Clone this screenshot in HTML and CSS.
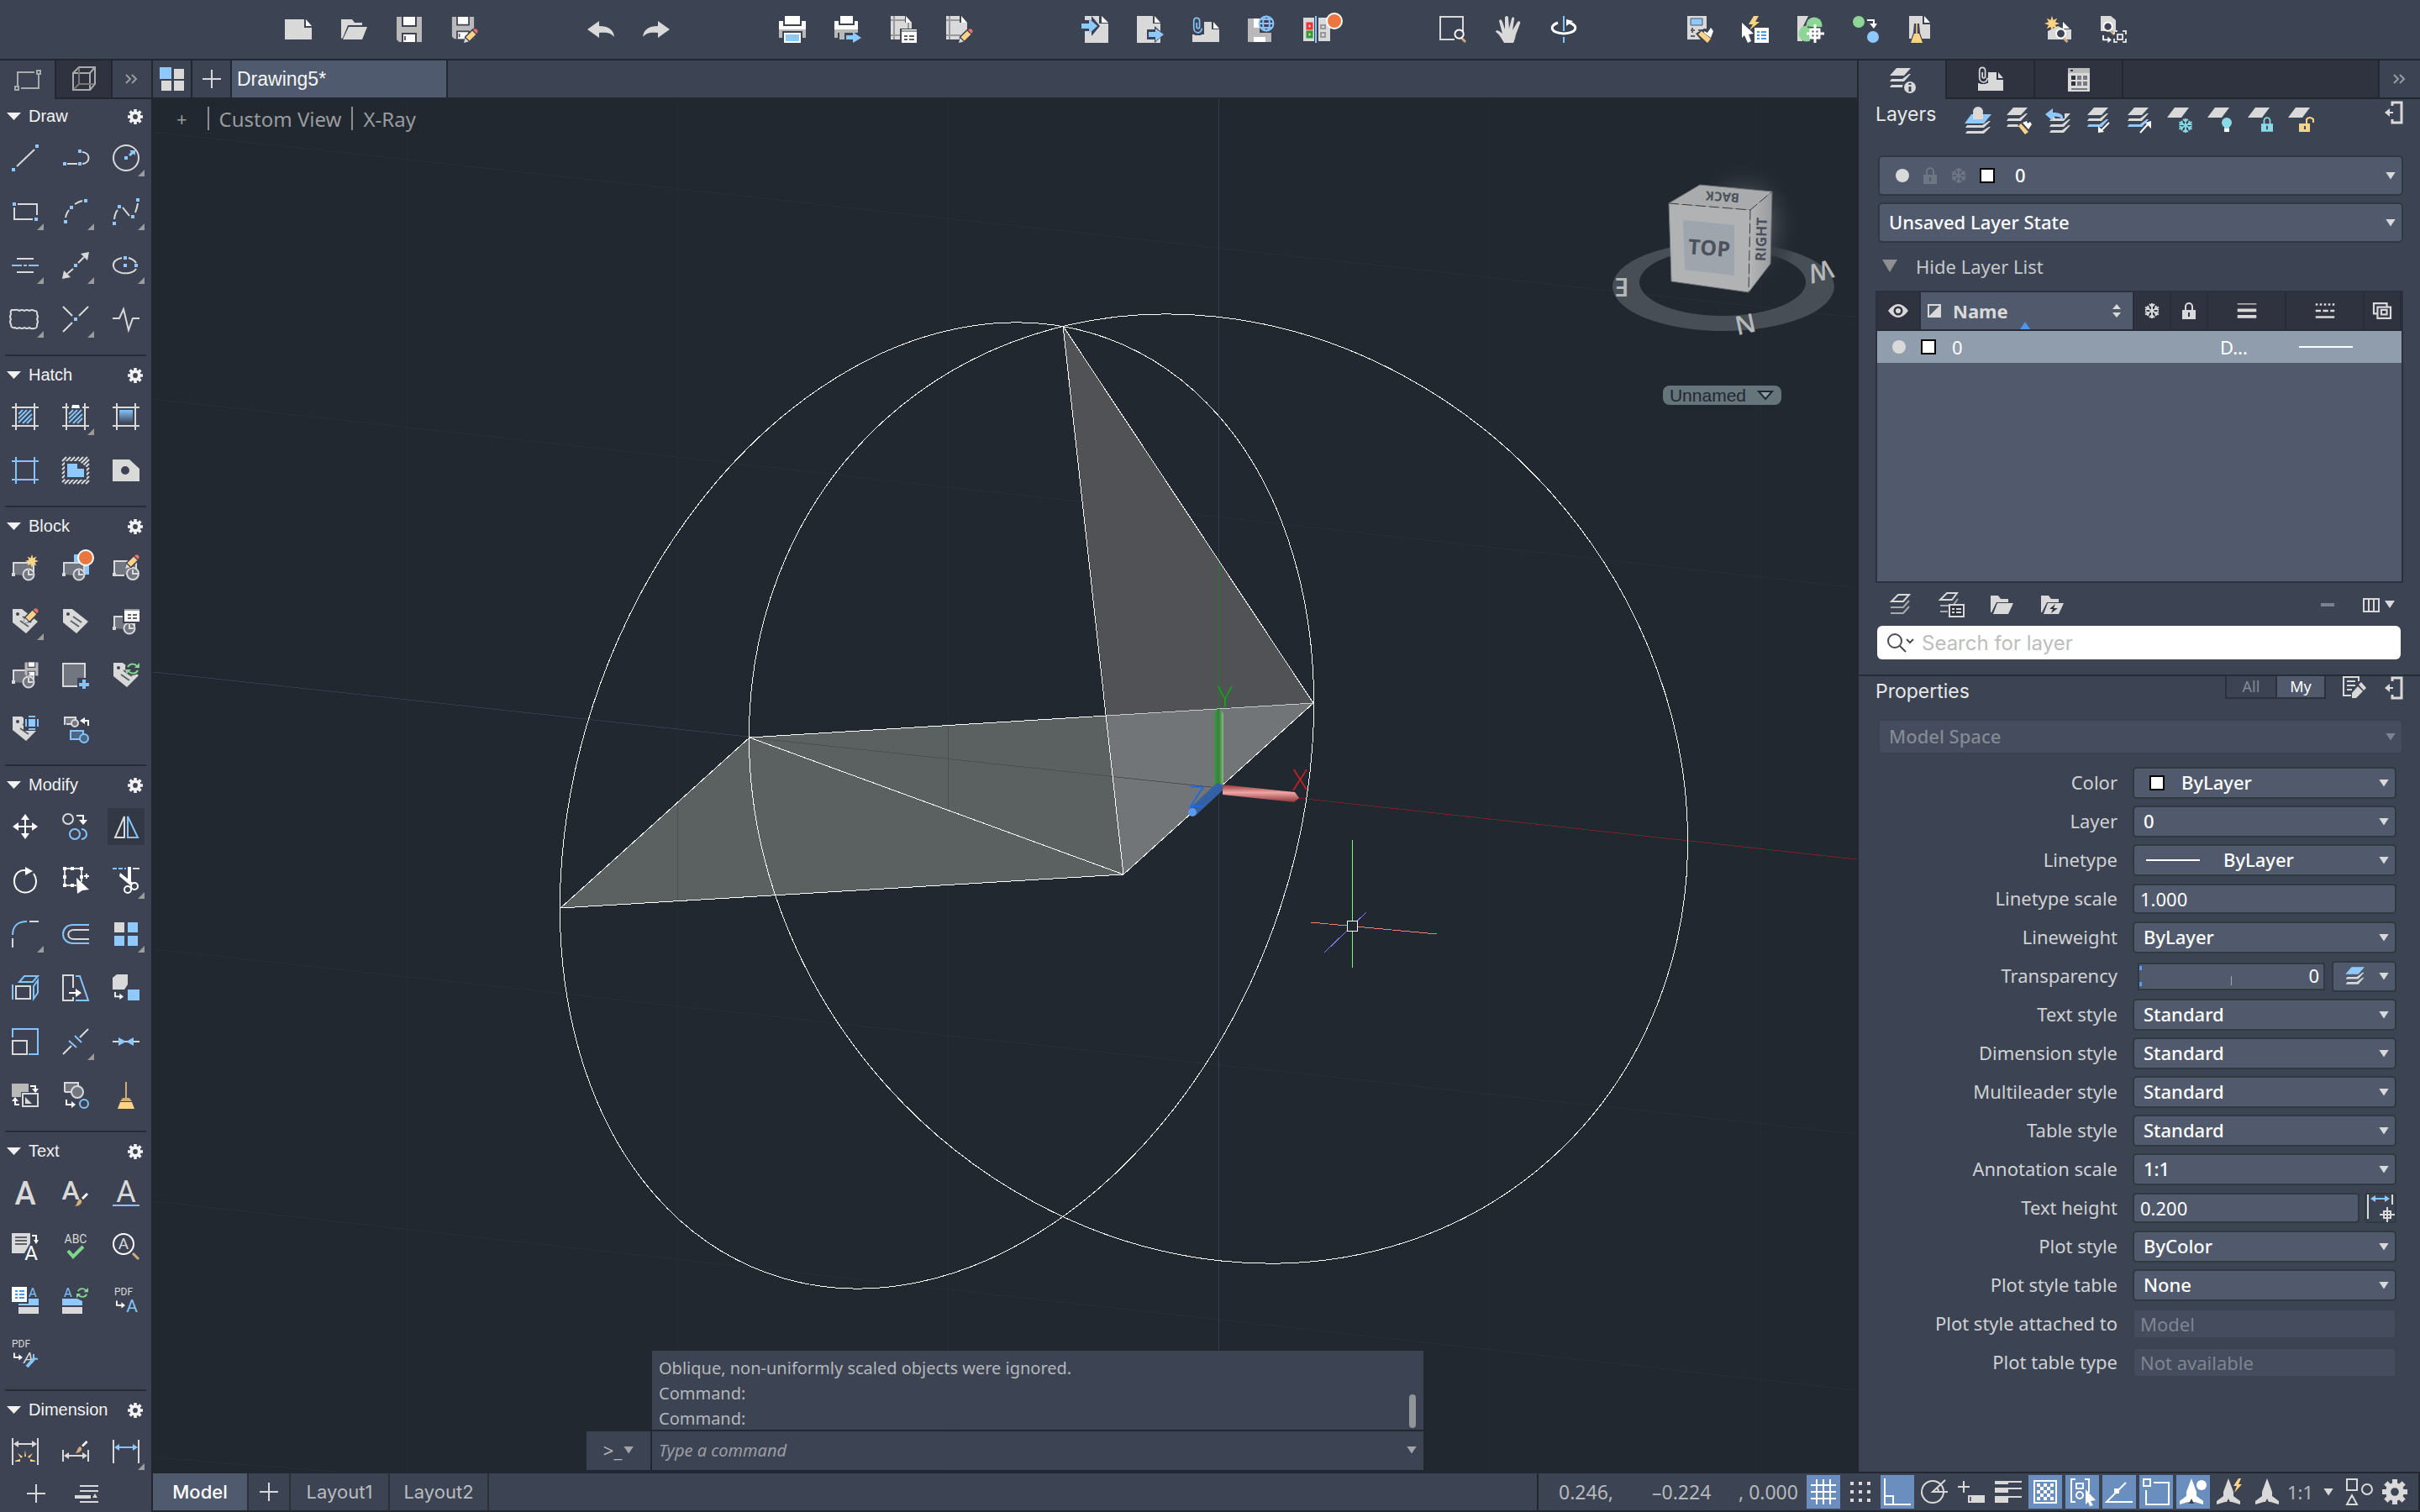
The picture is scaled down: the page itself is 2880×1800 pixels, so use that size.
FILE: index.html
```html
<!DOCTYPE html>
<html lang="en">
<head>
    <meta charset="UTF-8">
    <meta name="viewport" content="width=device-width, initial-scale=1.0">
    <title>Drawing5*</title>
    <link rel="stylesheet" href="styles.css">
</head>
<body>
    <!-- Shared icon parts -->
    <svg class="sprite" aria-hidden="true">
        <symbol id="gear" viewBox="0 0 20 20">
            <path fill="currentColor" fill-rule="evenodd" d="M8 0h4v3l1.500.6L15.700 1.500l2.800 2.800-2.100 2.200.6 1.500h3v4h-3l-.6 1.500 2.100 2.200-2.800 2.800-2.200-2.100-1.500.6v3H8v-3l-1.500-.6-2.200 2.100-2.800-2.800 2.100-2.200L3 12H0V8h3l.6-1.500-2.100-2.200 2.800-2.800 2.200 2.100L8 3zM10 6.800a3.200 3.200 0 1 0 0 6.400 3.200 3.200 0 0 0 0-6.400z"/>
        </symbol>
        <symbol id="pencil" viewBox="0 0 16 16">
            <path class="cut" d="M0 16l1-7L10 0h6v6l-9 9z"/>
            <path class="fg" d="M0 16l1.500-5.500 4 4z"/>
            <path class="fy" d="M2.300 9.700L9.500 2.500l4 4-7.200 7.200z"/>
            <path class="fr" d="M10.300 1.700C12 0 13.500-.2 14.800 1.200s1 2.800-.6 4.400z"/>
        </symbol>
        <symbol id="brush" viewBox="0 0 16 16">
            <path class="fw" d="M8 6l6-6 2 2-6 6z"/>
            <path class="ft" d="M0 16c3-2 2-5 5-8 2-1 4 1 3 4-2 3-5 4-8 4z"/>
        </symbol>
        <symbol id="block" viewBox="0 0 32 32">
            <path class="sg dim" d="M2 24V10H26V25H14"/>
            <rect class="fg" x="0" y="22" width="4" height="4"/>
            <circle class="sg dim" cx="20" cy="24" r="6.500"/>
            <path class="sg" d="M20 19v5h5"/>
        </symbol>
        <symbol id="tag" viewBox="0 0 32 32">
            <path class="fg" fill-rule="evenodd" d="M1 1h11l19 15-14 14L1 17zM7 5a2 2 0 1 0 0 4 2 2 0 0 0 0-4z"/>
            <path class="sd" d="M13 10l10 7M10 15l10 7"/>
        </symbol>
        <symbol id="stack" viewBox="0 0 32 32">
            <path class="fg" d="M10 1h17l-8 9H2zM25 8h2l-8 9H2l2-3h13zM25 15h2l-8 9H2l2-3h13z"/>
        </symbol>
        <symbol id="sheet" viewBox="0 0 32 32"><path class="fg" d="M10 1h17l-9 12H1z"/></symbol>
        <symbol id="floppy" viewBox="0 0 32 32">
            <path class="fm" d="M1 1h30v30H4l-3-3z"/>
            <path class="cut" d="M7 1h18v12H7zM7 20h18v11H7z"/>
            <path class="fw" d="M9 1h14v10H9zM9 22h14v9H9z"/>
            <path class="sd" d="M11 24v5"/>
        </symbol>
        <symbol id="lock" viewBox="0 0 16 20">
            <path fill="none" stroke="currentColor" stroke-width="2" d="M4 10V5a4 4 0 0 1 8 0v5"/>
            <path fill="currentColor" fill-rule="evenodd" d="M0 9h16v11H0zM7 12v5h2v-5z"/>
        </symbol>
        <symbol id="snow" viewBox="0 0 18 18">
            <path fill="none" stroke="currentColor" stroke-width="2" d="M9 0v18M1 4.500l16 9M17 4.500l-16 9M6 1l3 3 3-3M6 17l3-3 3 3M1 8l4-1.500L4 3M17 10l-4 1.500 1 3.500M17 8l-4-1.500L14 3M1 10l4 1.500L4 15"/>
        </symbol>
        <symbol id="burst" viewBox="0 0 16 16"><path class="fy" d="M8 0l1.500 4.500L13.500 2.500l-2 4L16 8l-4.500 1.500 2 4-4-2L8 16l-1.500-4.500-4 2 2-4L0 8l4.500-1.500-2-4 4 2z"/></symbol>
        <symbol id="sync" viewBox="0 0 16 16">
            <path class="sgr" d="M2 6a6.500 6.500 0 0 1 11-1M14 10a6.500 6.500 0 0 1-11 1"/>
            <path class="fgr" d="M10 7h6V1zM6 9H0v6z"/>
        </symbol>
        <symbol id="clip" viewBox="0 0 14 24">
            <path fill="none" stroke="currentColor" stroke-width="2" d="M6 9v6c0 3 4 3 4 0V7C10 1 2 1 2 7v9c0 9 11 9 11 1"/>
        </symbol>
        <symbol id="glass" viewBox="0 0 16 18">
            <path class="st" d="M10 12l5 5"/>
            <circle class="swh cutfill" cx="7" cy="7" r="5.500"/>
        </symbol>
        <symbol id="elbow" viewBox="0 0 12 10"><path class="swh" d="M1 0v6h7"/><path class="fw" d="M7 2l5 4-5 4z"/></symbol>
        <symbol id="dock" viewBox="0 0 22 28">
            <path fill="none" stroke="#d9d9d9" stroke-width="3" d="M9 6V2h11v24H9v-4"/>
            <path class="sg" d="M2 14h8"/><path class="fg" d="M0 14l6-5v10z"/>
        </symbol>
        <symbol id="annot" viewBox="0 0 32 32"><path fill="currentColor" d="M16 0l6 16v5l8 6v4l-10-3h-8L2 31v-4l8-6v-5z"/><path class="cut2" d="M16 24l3 6h-6z"/></symbol>
    </svg>

    <header class="toolbar">
        <div class="tool-set">
            <button aria-label="New"><svg viewBox="0 0 32 32"><path class="fg" d="M0 4h23v10h9v14H0z"/><path class="fw" d="M25 4l7 8h-7z"/></svg></button>
            <button aria-label="Open"><svg viewBox="0 0 32 32"><path class="fg" d="M1 4h13l3 4h9v3H9L3 26l-2 1zM10 13h22l-6 15H3z"/></svg></button>
            <button aria-label="Save"><svg viewBox="0 0 32 32"><use href="#floppy"/></svg></button>
            <button aria-label="Save As"><svg viewBox="0 0 32 32"><use href="#floppy" width="28" height="28"/><use href="#pencil" x="15" y="15" width="17" height="17"/></svg></button>
        </div>
        <div class="tool-set">
            <button aria-label="Undo"><svg viewBox="0 0 32 32"><path class="fg" d="M0 16L14 6v6c11 0 17 4 18 13-4-5-9-6-18-5v6z"/></svg></button>
            <button aria-label="Redo"><svg viewBox="0 0 32 32"><path class="fg" d="M32 16L18 6v6C7 12 1 16 0 25c4-5 9-6 18-5v6z"/></svg></button>
        </div>
        <div class="tool-set">
            <button aria-label="Plot"><svg viewBox="0 0 32 32"><path class="fw" d="M7 0h18v10H7zM0 6h5v6h22V6h5v10H0zM6 20h20v12H6z"/><path class="fm" d="M0 16h32v10h-4v-8H4v8H0z"/><path class="fb" d="M8 22h16v8H8z"/></svg></button>
            <button aria-label="Batch Plot"><svg viewBox="0 0 32 32"><path class="fw" d="M7 0h15v9H7zM0 6h5v5h19V6h4v10H0z"/><path class="fm" d="M0 16h28v4H0zM0 20h4v6H0zM6 20h8v8H6z"/><path class="cut" d="M12 20h20v12H12z"/><path class="fb" d="M14 23h8v-4l10 7-10 6v-4h-8z"/></svg></button>
            <button aria-label="Page Setup"><svg viewBox="0 0 32 32"><path class="fg" d="M1 0h17v8h8v20H1z"/><path class="sm" d="M1 5h17M5 0v28M1 23h14M22 8v16"/><path class="fw" d="M19 0l7 8h-7z"/><path class="cut" d="M12 15h20v17H12z"/><path class="fw" d="M14 16h18v16H14z"/><path class="sm" d="M14 18h18"/><path class="sd" d="M17 24h4M17 28h4M23 24h6M23 28h6"/></svg></button>
            <button aria-label="Plot Style"><svg viewBox="0 0 32 32"><path class="fg" d="M1 0h16v8h9v20H1z"/><path class="sm" d="M1 5h16M5 0v28M1 23h17"/><path class="fw" d="M19 0l7 8h-7z"/><use href="#pencil" x="16" y="15" width="17" height="17"/></svg></button>
        </div>
        <div class="tool-set">
            <button aria-label="Import"><svg viewBox="0 0 32 32"><path class="fg" d="M4 0h17v9h11v23H4z"/><path class="fw" d="M24 0l8 8h-8z"/><path class="cut" d="M0 5h12v-5l10 12-10 12v-6H0z"/><path class="fb" d="M0 9h9V3l10 9-10 9v-6H0z"/></svg></button>
            <button aria-label="Export"><svg viewBox="0 0 32 32"><path class="fg" d="M0 0h19v9h9v23H0z"/><path class="fw" d="M21 0l7 8h-7z"/><path class="cut" d="M12 16h9v-4l11 10-11 10v-4h-9z"/><path class="fb" d="M14 19h8v-4l10 7-10 8v-5h-8z"/></svg></button>
            <button aria-label="Attach"><svg viewBox="0 0 32 32"><path class="fg" d="M0 22h14V7h9v9h9v15H0z"/><path class="fw" d="M25 7l7 8h-7z"/><path class="cut" d="M0 0h13v20l-3 3H3l-3-3z"/><svg class="blue" x="0" y="0" width="12" height="21"><use href="#clip"/></svg></svg></button>
            <button aria-label="Save to Web"><svg viewBox="0 0 32 32"><path class="fm" d="M0 3h14v17h14v11H0z"/><path class="fw" d="M7 3h7v11H7zM7 25h14v6H7z"/><g class="sb"><circle class="cutfill" cx="22" cy="9" r="8.500"/><ellipse cx="22" cy="9" rx="4" ry="8.500"/><path d="M13 9h18M15 4h14M15 14h14"/></g></svg></button>
            <button aria-label="Compare"><svg viewBox="0 0 32 32"><path class="fg" d="M0 2h13v28H0zM18 2h14v28H18z"/><path class="sb" d="M15 0v32"/><path class="sred" d="M5 9h5v6H5z"/><path class="sgreen" d="M5 19h5v6H5z"/><path class="sm" d="M21 11h5v4h-5zM21 20h5v5h-5z"/><circle class="note" cx="37" cy="6" r="9"/></svg></button>
        </div>
        <div class="tool-set">
            <button aria-label="Zoom"><svg viewBox="0 0 32 32"><path class="sg" d="M18 28H1V1h27v18"/><use href="#glass" x="17" y="15" width="15" height="17"/></svg></button>
            <button aria-label="Pan"><svg viewBox="0 0 32 32"><path class="fg" d="M11 32C8 27 5 21 1 19c0-3 4-2 8 2L5 6c1-3 3-2 4 1l3 9V2c1-3 4-2 4 0l1 13 3-12c1-3 4-1 3 1l-2 13 6-10c2-2 4 0 3 2l-5 13c-1 5-2 8-3 10z"/></svg></button>
            <button aria-label="Orbit"><svg viewBox="0 0 32 32"><path class="sb" d="M16 0v18M16 25v7"/><path class="sw3" d="M9 8c-11 4-9 12 7 13 16-1 18-9 7-13"/><path class="fw" d="M19 12V4l8 2z"/></svg></button>
        </div>
        <div class="tool-set">
            <button aria-label="Quick Calculator"><svg viewBox="0 0 32 32"><path class="fg" d="M1 0h23v28H1z"/><path class="bluebox" d="M5 3h14v8H5z"/><path class="sd" d="M5 17h5M7 14v6M14 17h5M5 24h5M14 24h5"/><path class="cut" d="M11 21l10-6 11 1v16H20z"/><path class="fy" d="M14 22l4-4 11 9-4 5z"/><path class="fw" d="M21 18l4 2 4-6 3 4-3 8-8-6z"/></svg></button>
            <button aria-label="Quick Properties"><svg viewBox="0 0 32 32"><path class="fy" d="M14 0L8 10h5l-4 7 12-10h-5l4-7z"/><path class="fw" d="M0 8l14 13-6 1 3 8-4 2-4-9-3 3zM15 14h17v18H15z"/><path class="sb2" d="M18 19h3M18 23h3M18 27h3M23 19h6M23 23h6M23 27h6"/></svg></button>
            <button aria-label="Geolocation"><svg viewBox="0 0 32 32"><path class="fg" d="M0 0h13L6 14v16H0z"/><circle class="fgr" cx="20" cy="11" r="9.500"/><circle class="fgr" cx="11" cy="21" r="9.500"/><path class="sd" d="M12 13a9 9 0 0 1 9 9"/><path class="cut" d="M15 13h14v16H15z"/><path class="sw3" d="M21 10v22M11 21h21M16 16h10v10H16z"/></svg></button>
            <button aria-label="Blocks"><svg viewBox="0 0 32 32"><circle class="fgr" cx="7" cy="7" r="7"/><circle class="fb" cx="24" cy="25" r="7"/><path class="swh" d="M17 5h8v6"/><path class="fw" d="M20 9h9l-4 6z"/></svg></button>
            <button aria-label="Purge"><svg viewBox="0 0 32 32"><path class="fg" d="M1 0h16v10h9v17H1z"/><path class="fw" d="M19 0l7 8h-7z"/><path class="cut" d="M7 9h6l1 11 4 12H2l4-12z"/><path class="ft" d="M9 9h2v12H9z"/><path class="fy" d="M7 21h6l4 11H3z"/></svg></button>
        </div>
        <div class="tool-set">
            <button aria-label="New Content"><svg viewBox="0 0 32 32"><path class="fg" d="M4 18l12-6 8 4h8v12H4z"/><path class="fw" d="M22 7l8 8h-8z"/><use href="#burst" x="0" y="0" width="18" height="18"/><use href="#glass" x="12" y="14" width="17" height="18"/></svg></button>
            <button aria-label="Find Content"><svg viewBox="0 0 32 32"><path class="fg" d="M1 0h12l6 5v13H1z"/><use href="#glass" x="3" y="6" width="15" height="17"/><use href="#elbow" x="3" y="23" width="11" height="9"/><path class="sg" d="M17 22v-4h4M27 18h4v4M31 27v4h-4M21 31h-4v-4M21 22h6v6h-6z"/></svg></button>
        </div>
    </header>

    <div class="workspace">
        <aside class="palette">
            <div class="palette-tabs">
                <button class="active" aria-label="2D tools"><svg viewBox="0 0 32 32"><path class="sm2" d="M24 7H4v16M8 26h21V10"/><path class="sm2" d="M27 5h4v4h-4zM1 24h4v4H1z"/></svg></button>
                <button aria-label="3D tools"><svg viewBox="0 0 32 32"><path class="sm2" d="M3 9h20v20H3zM3 9l7-7h19v20l-6 7M23 9l6-7"/><path class="sdk" d="M10 3v19h18M10 22l-6 6"/></svg></button>
                <button class="more" aria-label="More tabs"><svg viewBox="0 0 16 12"><path d="M1 1l5 5-5 5M8 1l5 5-5 5"/></svg></button>
            </div>

            <section class="tool-group">
                <h3><i class="twisty"></i>Draw<svg class="gear"><use href="#gear"/></svg></h3>
                <div class="tool-grid">
                    <button aria-label="Line"><svg viewBox="0 0 32 32"><path class="sg" d="M6 26L27 6"/><path class="fb" d="M0 28h4v4H0zM28 0h4v4h-4z"/></svg></button>
                    <button aria-label="Polyline"><svg viewBox="0 0 32 32"><path class="sg" d="M6 23h12M24 9c10 1 10 13 0 14"/><path class="fb" d="M1 21h4v4H1zM19 21h4v4h-4zM19 6h4v4h-4z"/></svg></button>
                    <button class="fly" aria-label="Circle"><svg viewBox="0 0 32 32"><circle class="sg" cx="16" cy="16" r="15"/><path class="fb" d="M14 14h4v4h-4zM19 12l3-3-2-2h7v6l-2-2-4 3z"/></svg></button>
                    <button class="fly" aria-label="Rectangle"><svg viewBox="0 0 32 32"><path class="sg" d="M7 7h23v13M25 25H3V11"/><path class="fb" d="M1 5h4v4H1zM27 23h4v4h-4z"/></svg></button>
                    <button class="fly" aria-label="Arc"><svg viewBox="0 0 32 32"><path class="sg" d="M4 23q1-5 4-9M15 7q5-3 9-4"/><path class="fb" d="M2 26h4v4H2zM9 9h4v4H9zM26 1h4v4h-4z"/></svg></button>
                    <button class="fly" aria-label="Spline"><svg viewBox="0 0 32 32"><path class="sg" d="M2 25q1-8 4-11M12 11l8 10M27 17q2-5 3-11"/><path class="fb" d="M0 28h4v4H0zM6 8h4v4H6zM22 20h4v4h-4zM28 0h4v4h-4z"/></svg></button>
                    <button class="fly" aria-label="Centerline"><svg viewBox="0 0 32 32"><path class="sg" d="M6 8h20M6 24h20"/><path class="sb" d="M0 16h12M14 16h4M20 16h12"/></svg></button>
                    <button class="fly" aria-label="Construction Line"><svg viewBox="0 0 32 32"><path class="sg" d="M6 26l7-6M19 13l7-7"/><path class="fg" d="M0 32l2-10 8 8zM32 0l-2 10-8-8z"/><path class="fb" d="M14 14h4v4h-4z"/></svg></button>
                    <button class="fly" aria-label="Ellipse"><svg viewBox="0 0 32 32"><path class="sg" d="M11 7C-3 10-2 22 11 25c6 1 14 0 17-5M19 7c4 1 7 3 9 6"/><path class="fb" d="M13 5h4v4h-4zM13 14h4v4h-4zM26 14h4v4h-4z"/></svg></button>
                    <button class="fly" aria-label="Revision Cloud"><svg viewBox="0 0 32 32"><path class="sg" d="M4 5q3-1 5 1 3-2 6 0 3-2 6 0 3-2 6 0 4 0 3 4 2 3 0 6 2 3 0 6 1 5-4 5-3 1-5-1-3 2-6 0-3 2-6 0-3 2-5 0-5 1-5-4-2-3 0-6-2-3 0-6-1-4 1-5z"/></svg></button>
                    <button class="fly" aria-label="Multiple Points"><svg viewBox="0 0 32 32"><path class="sg" d="M1 1l11 11M20 12L31 1M1 31l11-11"/><path class="fb" d="M14 14h4v4h-4z"/></svg></button>
                    <button aria-label="Break-line"><svg viewBox="0 0 32 32"><path class="sg" d="M0 15h8l5-11 6 25 5-14h8"/></svg></button>
                </div>
            </section>

            <section class="tool-group">
                <h3><i class="twisty"></i>Hatch<svg class="gear"><use href="#gear"/></svg></h3>
                <div class="tool-grid">
                    <button aria-label="Hatch"><svg viewBox="0 0 32 32"><path class="sg" d="M0 5h32M0 27h32M5 0v32M27 0v32"/><path class="sb" d="M8 13l5-5M8 18L18 8M8 23L23 8M13 24L24 13M18 24l6-6"/></svg></button>
                    <button class="fly" aria-label="Hatch Edit"><svg viewBox="0 0 32 32"><path class="sg" d="M0 5h8M24 5h8M0 27h32M5 0v32M27 0v32"/><path class="fw" d="M11 6l1-4h8l1 4z"/><path class="sb" d="M8 13l5-5M8 18L18 8M8 23L23 8M13 24L24 13M18 24l6-6"/></svg></button>
                    <button aria-label="Gradient"><svg viewBox="0 0 32 32"><defs><linearGradient id="fade" x2="0" y2="1"><stop offset="0" stop-color="#84c4fb"/><stop offset="1" stop-color="#3d4352"/></linearGradient></defs><path class="sg" d="M0 5h32M0 27h32M5 0v32M27 0v32"/><path fill="url(#fade)" d="M8 8h16v16H8z"/></svg></button>
                    <button aria-label="Boundary"><svg viewBox="0 0 32 32"><path class="sb" d="M0 5h32M0 27h32M5 0v32M27 0v32"/></svg></button>
                    <button aria-label="Wipeout"><svg viewBox="0 0 32 32"><path class="sg" d="M0 5l5-5M0 10L10 0M0 15L15 0M0 20L20 0M0 25L25 0M0 30L30 0M3 32L32 3M8 32L32 8M13 32L32 13M18 32l14-14M23 32l9-9M28 32l4-4"/><path class="cut" d="M3 5h17l9 7v15H3z"/><path class="fb" d="M6 8h12v6h8v10H6z"/></svg></button>
                    <button aria-label="Region"><svg viewBox="0 0 32 32"><path class="fg" fill-rule="evenodd" d="M0 3h20l12 11v15H0zM15 11a5 5 0 1 0 0 10 5 5 0 0 0 0-10z"/></svg></button>
                </div>
            </section>

            <section class="tool-group">
                <h3><i class="twisty"></i>Block<svg class="gear"><use href="#gear"/></svg></h3>
                <div class="tool-grid">
                    <button aria-label="Create Block"><svg viewBox="0 0 32 32"><use href="#block"/><use href="#burst" x="16" y="0" width="16" height="16"/></svg></button>
                    <button aria-label="Insert Block"><svg viewBox="0 0 32 32"><path class="fb" d="M14 0h18v24H14z"/><path class="cut" d="M14 9h13v8H14z"/><use href="#block"/><circle class="note" cx="28" cy="4" r="9"/></svg></button>
                    <button aria-label="Edit Block"><svg viewBox="0 0 32 32"><path class="sg dim" d="M2 24V8h26v16"/><rect class="fg" y="22" width="4" height="4"/><circle class="sg dim" cx="24" cy="23" r="7"/><path class="sg" d="M24 18v5h6M4 25h10"/><use href="#pencil" x="15" y="0" width="17" height="17"/></svg></button>
                    <button class="fly" aria-label="Edit Attributes"><svg viewBox="0 0 32 32"><use href="#tag"/><use href="#pencil" x="14" y="0" width="18" height="18"/></svg></button>
                    <button aria-label="Define Attributes"><svg viewBox="0 0 32 32"><use href="#tag"/></svg></button>
                    <button aria-label="Attribute Manager"><svg viewBox="0 0 32 32"><use href="#block"/><path class="cut" d="M12 0h20v18H12z"/><path class="fw" d="M14 1h18v15H14z"/><path class="sm" d="M14 2h18"/><path class="sd" d="M18 8h4M18 12h4M24 8h5M24 12h5"/></svg></button>
                    <button aria-label="Write Block"><svg viewBox="0 0 32 32"><use href="#block"/><use href="#floppy" x="15" y="0" width="17" height="17"/></svg></button>
                    <button aria-label="Base Point"><svg viewBox="0 0 32 32"><path class="sg dim" d="M1 2h26v27H1z"/><path class="cut" d="M18 19h14v13H18z"/><path class="sb4" d="M20 27h12M26 21v11"/></svg></button>
                    <button aria-label="Synchronize Attributes"><svg viewBox="0 0 32 32"><use href="#tag"/><circle class="cut" cx="24" cy="7" r="9"/><use href="#sync" x="16" y="0" width="16" height="16"/></svg></button>
                    <button aria-label="Attribute Display"><svg viewBox="0 0 32 32"><use href="#tag"/><path class="cut" d="M14 0h18v18H14z"/><path class="fb" d="M20 4h8v9h-8z"/><path class="sb" d="M20 1h8M20 16h8M17 4v9M31 4v9"/></svg></button>
                    <button aria-label="Replace Block"><svg viewBox="0 0 32 32"><path class="sg dim" d="M3 11V2h13v8H5"/><circle class="sg dim" cx="15" cy="9" r="4"/><path class="swh" d="M31 12V6h-6"/><path class="fw" d="M27 2v8l-6-4z"/><path class="sb dimb" d="M10 29V18h15v10H10"/><circle class="sb dimb" cx="26" cy="27" r="5"/></svg></button>
                </div>
            </section>

            <section class="tool-group">
                <h3><i class="twisty"></i>Modify<svg class="gear"><use href="#gear"/></svg></h3>
                <div class="tool-grid">
                    <button aria-label="Move"><svg viewBox="0 0 32 32"><path class="swh" d="M4 16h24M16 4v24"/><path class="fw" d="M1 16l7-5v10zM31 16l-7-5v10zM16 1l-5 7h10zM16 31l-5-7h10z"/></svg></button>
                    <button aria-label="Copy"><svg viewBox="0 0 32 32"><circle class="sg" cx="7" cy="7" r="6"/><circle class="sb" cx="15" cy="25" r="6"/><path class="sb" d="M23 19a6 6 0 1 1 0 12"/><path class="swh" d="M17 3h8v6"/><path class="fw" d="M20 8h10l-5 6z"/></svg></button>
                    <button class="selected" aria-label="Mirror"><svg viewBox="0 0 32 32"><path class="sg" d="M14 4v25H3z"/><path class="sb" d="M18 4v25h12z"/></svg></button>
                    <button aria-label="Rotate"><svg viewBox="0 0 32 32"><path class="swh" d="M20 5C9 1 3 9 3 17c0 18 26 18 26 0 0-3-1-6-3-9"/><path class="fw" d="M16 0l9 5-9 5z"/></svg></button>
                    <button aria-label="Stretch"><svg viewBox="0 0 32 32"><path class="sg" d="M3 2h20v16M3 2v20h14"/><path class="fw" d="M1 0h4v4H1zM10 0h4v4h-4zM21 0h4v4h-4zM1 10h4v4H1zM1 20h4v4H1zM10 20h4v4h-4zM21 10h4v4h-4zM17 13l15 14-8 1-6 4zM26 10h6v2h-6zM28 8h2v6h-2z"/></svg></button>
                    <button class="fly" aria-label="Trim"><svg viewBox="0 0 32 32"><path class="sb" stroke-dasharray="5 2" d="M0 2h16"/><path class="sg" d="M24 2h8"/><path class="fw" d="M18 0h4v18h-4zM9 7l15 12-3 3L8 11z"/><circle class="swh" cx="18" cy="27" r="4"/><circle class="swh" cx="26" cy="23" r="4"/></svg></button>
                    <button class="fly" aria-label="Fillet"><svg viewBox="0 0 32 32"><path class="sb" d="M1 17C1 6 8 1 18 1"/><path class="sg" d="M21 1h11M1 21v11"/></svg></button>
                    <button aria-label="Offset"><svg viewBox="0 0 32 32"><path class="sb" d="M32 5H13C-3 5-3 27 13 27h19"/><path class="sg" d="M32 11H14c-9 0-9 11 0 11h18"/></svg></button>
                    <button class="fly" aria-label="Array"><svg viewBox="0 0 32 32"><path class="fg" d="M2 2h12v12H2z"/><path class="fb" d="M18 2h12v12H18zM2 18h12v12H2zM18 18h12v12H18z"/></svg></button>
                    <button aria-label="Edit Solid"><svg viewBox="0 0 32 32"><path class="sg" d="M5 14h17v15H5z"/><path class="sb" d="M1 12v18M9 9l6-7h16l-6 7zM26 14l5-7v15l-5 7z"/></svg></button>
                    <button aria-label="Align"><svg viewBox="0 0 32 32"><path class="sg" d="M13 16V1H1v30h12v-4"/><path class="sb" d="M16 2h5l10 29H16"/><path class="swh" d="M8 22h10"/><path class="fw" d="M16 17l7 5-7 5z"/></svg></button>
                    <button aria-label="Convert"><svg viewBox="0 0 32 32"><path class="fg" d="M0 4l5-4h13v12l-4 6H0z"/><path class="fb" d="M18 18h14v13H18z"/><use href="#elbow" x="2" y="21" width="11" height="9"/></svg></button>
                    <button aria-label="Scale"><svg viewBox="0 0 32 32"><path class="sb" d="M1 11V1h30v30H20"/><path class="sg" d="M1 15h17v16H1z"/></svg></button>
                    <button class="fly" aria-label="Break"><svg viewBox="0 0 32 32"><path class="sg" d="M1 31l10-10M21 11L31 1"/><path class="sb" d="M8 15l9 8M15 9l8 8"/></svg></button>
                    <button aria-label="Join"><svg viewBox="0 0 32 32"><path class="sg" d="M0 16h32"/><path class="fb" d="M7 11l9 5-9 5zM25 11l-9 5 9 5z"/></svg></button>
                    <button aria-label="Draw Order"><svg viewBox="0 0 32 32"><path class="fm" d="M0 2h20v10h-9v6H0z"/><path class="sg" d="M13 14h18v15H13z"/><path class="fg" d="M16 18v8h8z"/><path class="swh" d="M22 5h6v4M9 27H4v-5"/><path class="fw" d="M24 8h8l-4 5zM0 23h8l-4-5z"/></svg></button>
                    <button aria-label="Copy Nested"><svg viewBox="0 0 32 32"><path class="sg dim" d="M3 12V1h16v11H3"/><circle class="sg dim" cx="18" cy="12" r="7"/><circle class="sb" cx="26" cy="26" r="5"/><use href="#elbow" x="4" y="21" width="12" height="10"/></svg></button>
                    <button aria-label="Clean"><svg viewBox="0 0 32 32"><path class="ft" d="M15 0h2v19h-2z"/><path class="ft" d="M12 19h8l3 4H9z"/><path class="fy" d="M9 24h14l3 8H6z"/></svg></button>
                </div>
            </section>

            <section class="tool-group">
                <h3><i class="twisty"></i>Text<svg class="gear"><use href="#gear"/></svg></h3>
                <div class="tool-grid">
                    <button aria-label="Multiline Text"><svg viewBox="0 0 32 32"><text class="glyph bold" x="16" y="30" font-size="38">A</text></svg></button>
                    <button aria-label="Text Style"><svg viewBox="0 0 32 32"><text class="glyph bold" x="10" y="24" font-size="32">A</text><use href="#brush" x="14" y="16" width="18" height="16"/></svg></button>
                    <button aria-label="Single Line Text"><svg viewBox="0 0 32 32"><text class="glyph" x="16" y="27" font-size="36">A</text><path class="sb" d="M0 31h32"/></svg></button>
                    <button aria-label="Convert Text"><svg viewBox="0 0 32 32"><path class="fg" d="M0 0h22v12l-7 12H0z"/><path class="sd" d="M4 5h14M4 9h14M4 13h14"/><path class="swh" d="M24 3h5v6"/><path class="fw" d="M26 8h6l-3 5z"/><text class="glyph white" x="23" y="32" font-size="24">A</text></svg></button>
                    <button aria-label="Spell Check"><svg viewBox="0 0 32 32"><text class="glyph" x="16" y="12" font-size="14">ABC</text><path class="scheck" d="M7 21l6 7 12-12"/></svg></button>
                    <button aria-label="Find Text"><svg viewBox="0 0 32 32"><path class="st" d="M24 24l7 7"/><circle class="swh" cx="13" cy="13" r="12"/><text class="glyph" x="13" y="19" font-size="19">A</text></svg></button>
                    <button aria-label="Field"><svg viewBox="0 0 32 32"><path class="fw" d="M0 0h18v18H0z"/><path class="sb2" d="M4 5h3M4 9h3M4 13h3M9 5h6M9 9h6M9 13h6"/><path class="fb" d="M20 14h12v8H8v-2h12z"/><path class="fg" d="M8 24h24v8H8z"/><text class="glyph blue" x="25" y="12" font-size="15">A</text></svg></button>
                    <button aria-label="Update Field"><svg viewBox="0 0 32 32"><path class="fb" d="M0 14h18l6 3v5H0z"/><path class="fg" d="M0 24h24v8H0z"/><text class="glyph blue" x="7" y="12" font-size="15">A</text><use href="#sync" x="16" y="0" width="16" height="14"/></svg></button>
                    <button aria-label="PDF Text"><svg viewBox="0 0 32 32"><text class="glyph" x="13" y="10" font-size="12">PDF</text><use href="#elbow" x="4" y="15" width="11" height="12"/><text class="glyph blue" x="23" y="30" font-size="21">A</text></svg></button>
                    <button aria-label="PDF Settings"><svg viewBox="0 0 32 32"><text class="glyph" x="11" y="8" font-size="12">PDF</text><use href="#elbow" x="2" y="13" width="11" height="12"/><text class="glyph" x="20" y="27" font-size="19" font-style="italic">A</text><path class="sb4" d="M18 31l9-10"/><path class="sb" d="M26 16v5l5 1"/></svg></button>
                </div>
            </section>

            <section class="tool-group">
                <h3><i class="twisty"></i>Dimension<svg class="gear"><use href="#gear"/></svg></h3>
                <div class="tool-grid">
                    <button aria-label="Dimension"><svg viewBox="0 0 32 32"><path class="sg" d="M1 0v32M31 0v32M5 7h22"/><path class="fg" d="M2 7l6-4v8zM30 7l-6-4v8z"/><path class="fy" d="M15 22l1-8 1 8zM11 24l-4-6 6 4zM21 24l4-6-6 4zM4 27l6-2v3H4zM28 27l-6-2v3h6z"/></svg></button>
                    <button aria-label="Dimension Style"><svg viewBox="0 0 32 32"><path class="sg" d="M1 14v14M31 14v14M5 21h22"/><path class="fg" d="M2 21l6-4v8zM30 21l-6-4v8z"/><use href="#brush" x="14" y="3" width="18" height="15"/></svg></button>
                    <button class="fly" aria-label="Linear"><svg viewBox="0 0 32 32"><path class="sg" d="M1 2v28M31 2v28"/><path class="sb" d="M5 11h22"/><path class="fb" d="M2 11l6-4v8zM30 11l-6-4v8z"/></svg></button>
                </div>
            </section>

            <footer class="palette-foot">
                <button aria-label="Add"><svg viewBox="0 0 24 24"><path class="sg" d="M1 12h22M12 1v22"/></svg></button>
                <button aria-label="List"><svg viewBox="0 0 28 24"><path class="sg" d="M6 3h22M6 9h22M6 22h22"/><path class="fg" d="M0 14h19v4H0zM21 17l3-5 3 5z"/></svg></button>
            </footer>
        </aside>

        <div class="stage">
            <div class="stage-main">
                <main class="document">
                    <nav class="file-tabs">
                        <button class="thumbs" aria-label="All drawings"><svg viewBox="0 0 30 30"><path class="fb" d="M0 1h14v14H0z"/><path class="fg" d="M17 3h12v12H17zM2 17h12v12H2zM17 17h12v12H17z"/></svg></button>
                        <button class="add" aria-label="New drawing"><svg viewBox="0 0 22 22"><path class="sg" d="M0 11h22M11 0v22"/></svg></button>
                        <button class="file active">Drawing5*</button>
                    </nav>

                    <div class="viewport">
                        <svg class="model" viewBox="182 118 2028 1634" preserveAspectRatio="xMidYMid slice">
                            <defs>
                                <linearGradient id="gx" x2="0" y2="1"><stop offset="0" stop-color="#8c3437"/><stop offset=".45" stop-color="#f0a5a5"/><stop offset="1" stop-color="#8c3437"/></linearGradient>
                                <linearGradient id="gy"><stop offset="0" stop-color="#3f9a41"/><stop offset=".5" stop-color="#35803a"/><stop offset="1" stop-color="#86b985"/></linearGradient>
                                <linearGradient id="side" x2="1" y2="0"><stop offset="0" stop-color="#b6b7b9"/><stop offset="1" stop-color="#999b9e"/></linearGradient>
                                <radialGradient id="glow"><stop offset=".5" stop-color="#3a4148"/><stop offset="1" stop-color="#212830" stop-opacity="0"/></radialGradient>
                            </defs>
                            <!-- ground grid -->
                            <path class="grid" d="M182 157L2210 378M182 475L2210 700M182 1130L2210 1350M182 1430L2210 1655M182 1735L400 1752M484 118V1752M806 118V1752M1128 118V1752M1772 118V1752M2095 118V1752"/>
                            <path class="axis-z" d="M1450 118V1640"/>
                            <path class="axis-z" d="M182 800L1450 938"/>
                            <path class="axis-x" d="M1545 950L2210 1023"/>
                            <!-- faces -->
                            <path class="face" d="M892 878L1563 837 1337 1041 667 1081z"/>
                            <path class="face-up" d="M1265 388L1563 837 1317 852z"/>
                            <path class="face-both" d="M1317 852L1563 837 1337 1041z"/>
                            <path class="inner" d="M892 878L1450 938M806 957V1072M1128 864V965"/>
                            <path class="axis-y" d="M1450 670V848"/>
                            <path class="wire" d="M1317 852L892 878 667 1081 1337 1041 892 878M1265 388L1337 1041 1563 837z"/>
                            <path class="wire soft" d="M1317 852L1563 837"/>
                            <ellipse class="wire" cx="1115" cy="959" rx="592" ry="426" transform="rotate(-70 1115 959)"/>
                            <ellipse class="wire" cx="1450" cy="939" rx="592" ry="530" transform="rotate(48 1450 939)"/>
                            <!-- UCS icon -->
                            <path fill="url(#gy)" d="M1445 849l5-6 6 6v88h-11z"/>
                            <path fill="url(#gx)" d="M1455 934l86 9 5 7-6 5-85-9z"/>
                            <path class="ucs-z" d="M1450 938L1420 966"/>
                            <circle class="ucs-ball" cx="1419" cy="967" r="5"/>
                            <text class="ucs y" x="1458" y="842">Y</text>
                            <text class="ucs x" x="1547" y="941">X</text>
                            <text class="ucs z" x="1424" y="961">Z</text>
                            <!-- crosshair -->
                            <path class="cross-z" d="M1576 1134l50-48"/>
                            <path class="cross-x" d="M1560 1098l150 14"/>
                            <path class="cross-y" d="M1609 1000v152"/>
                            <rect class="pick" x="1603" y="1096" width="12" height="12"/>
                            <!-- view cube -->
                            <path class="ring" fill-rule="evenodd" d="M1919 341a132 53 0 1 0 264 0 132 53 0 1 0-264 0zM1951 336a99 40 0 1 1 198 0 99 40 0 1 1-198 0z"/>
                            <ellipse fill="url(#glow)" cx="2075" cy="268" rx="70" ry="78"/>
                            <path class="cube" d="M1986 242L2083 250 2081 348 1989 335z"/>
                            <path class="cube-back" d="M1986 242L2023 220 2109 228 2083 250z"/>
                            <path fill="url(#side)" d="M2083 250L2109 228 2107 314 2081 348z"/>
                            <path class="cube-in" d="M2003 262L2064 268V328L2005 321z"/>
                            <path class="cube-edge" d="M1986 242L2083 250 2109 228M2083 250L2081 348"/>
                            <path class="cube-rim" d="M1986 242L2023 220 2109 228 2107 314 2081 348 1989 335z"/>
                            <text class="cube-text" x="2034" y="304" font-size="25" transform="rotate(4 2034 295)">TOP</text>
                            <text class="cube-text" x="2050" y="239" font-size="15" transform="rotate(184 2050 234)">BACK</text>
                            <text class="cube-text" x="2096" y="291" font-size="17" transform="rotate(-88 2096 285)">RIGHT</text>
                            <text class="compass" x="1930" y="353" transform="rotate(180 1930 342)">E</text>
                            <text class="compass" x="2077" y="397" transform="rotate(-12 2077 386)">N</text>
                            <text class="compass" x="2167" y="334" transform="rotate(164 2167 323)">W</text>
                        </svg>

                        <div class="view-controls">
                            <button>+</button><i></i><button>Custom View</button><i></i><button>X-Ray</button>
                        </div>
                        <button class="ucs-menu">Unnamed<svg viewBox="0 0 18 11"><path d="M1 1h16l-8 9z"/></svg></button>

                        <div class="command">
                            <div class="history">
                                <p>Oblique, non-uniformly scaled objects were ignored.</p>
                                <p>Command:</p>
                                <p>Command:</p>
                                <span class="thumb"></span>
                            </div>
                            <button class="prompt" aria-label="Recent commands">&gt;_<i class="caret"></i></button>
                            <div class="entry"><input type="text" placeholder="Type a command" aria-label="Command"><i class="caret"></i></div>
                        </div>
                    </div>
                </main>

                <aside class="inspector">
                    <div class="panel-tabs">
                        <button class="active" aria-label="Layers"><svg viewBox="0 0 34 34"><use href="#stack" y="2" width="32" height="32"/><circle class="cut" cx="26" cy="26" r="9"/><circle class="fg" cx="26" cy="26" r="7"/><path class="sdk2" d="M26 25v6M26 21v2"/></svg></button>
                        <button aria-label="References"><svg viewBox="0 0 34 34"><path class="fg" d="M2 22h12V9h10v9h8v13H2z"/><path class="fg" d="M26 9l6 7h-6z"/><path class="cut3" d="M1 1h13v19l-3 3H5l-4-3z"/><svg class="gray" x="2" y="1" width="12" height="21"><use href="#clip"/></svg></svg></button>
                        <button aria-label="Sheets"><svg viewBox="0 0 34 34"><path class="fg" d="M4 4h26v28H4z"/><path class="fm" d="M4 4h26v6H4z"/><path class="dark" d="M7 6h3v2H7zM8 13h5v5H8zM8 20h5v5H8z"/><path class="mid" d="M15 13h5v5h-5zM22 13h5v5h-5zM15 20h5v5h-5zM22 20h5v5h-5zM8 28h19v2H8z"/></svg></button>
                        <span></span>
                        <button class="more" aria-label="More panels"><svg viewBox="0 0 16 12"><path d="M1 1l5 5-5 5M8 1l5 5-5 5"/></svg></button>
                    </div>

                    <section class="layers">
                        <div class="section-head">
                            <h2>Layers</h2>
                            <div class="layer-tools">
                                <button aria-label="Make current"><svg viewBox="0 0 32 32"><path class="fb" d="M8 9h24l-9 11H0z"/><circle class="fg" cx="16" cy="6" r="6"/><path class="fg" d="M10 8h12v7H10zM29 17h2l-8 8H1l2-3h18zM29 24h2l-8 8H1l2-3h18z"/></svg></button>
                                <button aria-label="Match layer"><svg viewBox="0 0 32 32"><use href="#stack"/><path class="cut" d="M15 22l10-8 7 8v10h-8z"/><path class="fy" d="M16 23l3-3 9 10-4 3z"/><path class="fw" d="M21 19l5-2 1 3 3-2 2 3-4 6z"/></svg></button>
                                <button aria-label="Previous layer"><svg viewBox="0 0 32 32"><use href="#stack" x="3" y="7" width="32" height="32"/><path class="cut" d="M0 0h23v14H12z"/><path class="fb" d="M0 9l9-7v5c9 0 13 2 12 9-3-4-6-5-12-4v5z"/></svg></button>
                                <button aria-label="Isolate"><svg viewBox="0 0 32 32"><use href="#stack"/><path class="fb" d="M25 15h2l-8 9H2l2-3h13z"/><path class="swh" d="M28 19l-9 9"/><path class="fw" d="M15 31v-8l7 7z"/></svg></button>
                                <button aria-label="Unisolate"><svg viewBox="0 0 32 32"><use href="#stack"/><path class="fb" d="M25 15h2l-8 9H2l2-3h13z"/><path class="swh" d="M17 31l9-10"/><path class="fw" d="M30 17v9l-7-7z"/></svg></button>
                                <button aria-label="Freeze"><svg viewBox="0 0 32 32"><use href="#sheet"/><svg class="teal" x="14" y="14" width="18" height="17"><use href="#snow"/></svg></svg></button>
                                <button aria-label="Layer off"><svg viewBox="0 0 32 32"><use href="#sheet"/><circle class="fteal" cx="24" cy="19" r="6"/><path class="fteal" d="M21 22h6v4h-6z"/><path class="fw" d="M21 26h6v4h-6z"/></svg></button>
                                <button aria-label="Lock"><svg viewBox="0 0 32 32"><use href="#sheet"/><svg class="teal" x="17" y="12" width="14" height="18"><use href="#lock"/></svg></svg></button>
                                <button aria-label="Unlock"><svg viewBox="0 0 32 32"><use href="#sheet"/><path class="fy" fill-rule="evenodd" d="M14 20h13v10H14zM20 23v4h2v-4z"/><path class="sy" d="M23 20v-5q4-4 8 0v4"/></svg></button>
                            </div>
                            <button class="dock" aria-label="Detach"><svg viewBox="0 0 22 28"><use href="#dock"/></svg></button>
                        </div>

                        <div class="combo tall current-layer">
                            <i class="dot"></i>
                            <svg class="ghost"><use href="#lock"/></svg>
                            <svg class="ghost"><use href="#snow"/></svg>
                            <i class="swatch"></i>
                            <select aria-label="Current layer"><option>0</option></select><i class="caret"></i>
                        </div>
                        <div class="combo tall">
                            <select aria-label="Layer state"><option>Unsaved Layer State</option></select><i class="caret"></i>
                        </div>
                        <button class="toggle-list"><i class="twisty"></i>Hide Layer List</button>

                        <div class="layer-list">
                            <table>
                                <thead>
                                    <tr>
                                        <th class="c-eye"><svg viewBox="0 0 24 20"><path class="fg" fill-rule="evenodd" d="M0 10Q12-6 24 10 12 26 0 10zM12 4.500a5.500 5.500 0 1 0 0 11 5.500 5.500 0 0 0 0-11z"/><circle class="fg" cx="12" cy="10" r="3"/></svg></th>
                                        <th class="c-name"><div><svg viewBox="0 0 16 16"><path class="fg" fill-rule="evenodd" d="M0 0h16v16H0zM2 2v12L14 2z"/></svg>Name<svg class="sort" viewBox="0 0 10 16"><path class="fg" d="M0 6l5-6 5 6zM0 10l5 6 5-6z"/></svg></div></th>
                                        <th class="c-small"><svg viewBox="0 0 18 20"><use href="#snow" y="1" width="18" height="18"/></svg></th>
                                        <th class="c-small"><svg viewBox="0 0 16 20"><use href="#lock"/></svg></th>
                                        <th class="c-wide"><svg viewBox="0 0 18 16"><path class="fg" d="M0 1h18v1H0zM0 6h18v3H0zM0 12h18v3H0z"/></svg></th>
                                        <th class="c-wide"><svg viewBox="0 0 18 16"><path class="sg" stroke-dasharray="2 2" d="M0 2h18"/><path class="sg" stroke-dasharray="5 2" d="M0 8h18"/><path class="sg" d="M0 14h18"/></svg></th>
                                        <th class="c-small"><svg viewBox="0 0 20 18"><path class="sg" d="M5 12H1V1h14v3M5 5h14v12H5zM9 8h6v5H9z"/></svg></th>
                                    </tr>
                                </thead>
                                <tbody>
                                    <tr>
                                        <td><i class="dot"></i></td>
                                        <td class="name"><div><i class="swatch"></i>0</div></td>
                                        <td></td><td></td>
                                        <td class="weight">D...</td>
                                        <td><i class="line"></i></td>
                                        <td></td>
                                    </tr>
                                </tbody>
                            </table>
                        </div>

                        <div class="list-tools">
                            <button aria-label="New layer"><svg viewBox="0 0 32 32"><path class="sg" d="M13 4h13l-7 8H5z"/><path class="sm2" d="M26 11l-7 8H4M26 18l-7 8H4"/></svg></button>
                            <button aria-label="Layer states"><svg viewBox="0 0 32 32"><path class="sg" d="M11 2h12l-6 8H3z"/><path class="sm2" d="M24 9l-6 8H3M12 24H3"/><path class="fg" d="M13 15h19v16H13z"/><path class="dark" d="M15 17h15v12H15z"/><path class="sg" d="M17 21h3M17 25h3M22 21h6M22 25h6"/></svg></button>
                            <button aria-label="New group"><svg viewBox="0 0 32 32"><path class="fg" d="M3 5h9l3 4h9v4H10L4 25H3zM11 14h19l-6 13H6z"/></svg></button>
                            <button aria-label="New dynamic group"><svg viewBox="0 0 32 32"><path class="fg" d="M3 5h9l3 4h9v4H10L4 25H3zM11 14h19l-6 13H6z"/><path class="dark" d="M20 15l-7 6h4l-2 5 8-6h-5z"/></svg></button>
                            <span class="minus"></span>
                            <button class="columns" aria-label="Columns"><svg viewBox="0 0 20 18"><path class="sg" d="M1 2h18v15H1zM7 2v15M13 2v15"/></svg><i class="caret"></i></button>
                        </div>
                        <label class="search">
                            <svg viewBox="0 0 32 24"><circle cx="9" cy="10" r="8"/><path d="M15 16l7 7M23 8l4 4 4-4"/></svg>
                            <input type="text" placeholder="Search for layer" aria-label="Search for layer">
                        </label>
                    </section>

                    <section class="properties">
                        <div class="section-head">
                            <h2>Properties</h2>
                            <div class="segment"><button>All</button><button class="on">My</button></div>
                            <button class="edit" aria-label="Customize"><svg viewBox="0 0 28 27"><path class="sg" d="M19 6V1H1v22h9M5 6h10M5 11h10M5 16h6"/><path class="fg" d="M11 26v-6l7-8 6 6-8 8zM19 10l3-3 6 7-3 3z"/></svg></button>
                            <button class="dock" aria-label="Detach"><svg viewBox="0 0 22 28"><use href="#dock"/></svg></button>
                        </div>
                        <div class="combo mid off">
                            <select aria-label="Selection" disabled><option>Model Space</option></select><i class="caret"></i>
                        </div>

                        <form class="props">
                            <label for="color">Color</label>
                            <div class="combo with-swatch"><i class="swatch"></i><select id="color"><option>ByLayer</option></select><i class="caret"></i></div>
                            <label for="layer">Layer</label>
                            <div class="combo"><select id="layer"><option>0</option></select><i class="caret"></i></div>
                            <label for="linetype">Linetype</label>
                            <div class="combo with-line"><i class="line"></i><select id="linetype"><option>ByLayer</option></select><i class="caret"></i></div>
                            <label for="ltscale">Linetype scale</label>
                            <input class="field" id="ltscale" type="text" value="1.000">
                            <label for="lineweight">Lineweight</label>
                            <div class="combo"><select id="lineweight"><option>ByLayer</option></select><i class="caret"></i></div>
                            <label for="transparency">Transparency</label>
                            <div class="pair">
                                <div class="slider"><input id="transparency" type="range" min="0" max="90" value="0"><output>0</output></div>
                                <button type="button" class="by-layer" aria-label="Transparency by layer"><svg viewBox="-1 -3 32 32"><use href="#stack" width="32" height="32"/><path class="fb" d="M10 1h17l-8 9H2z"/></svg><i class="caret"></i></button>
                            </div>
                            <label for="textstyle">Text style</label>
                            <div class="combo"><select id="textstyle"><option>Standard</option></select><i class="caret"></i></div>
                            <label for="dimstyle">Dimension style</label>
                            <div class="combo"><select id="dimstyle"><option>Standard</option></select><i class="caret"></i></div>
                            <label for="mlstyle">Multileader style</label>
                            <div class="combo"><select id="mlstyle"><option>Standard</option></select><i class="caret"></i></div>
                            <label for="tablestyle">Table style</label>
                            <div class="combo"><select id="tablestyle"><option>Standard</option></select><i class="caret"></i></div>
                            <label for="annoscale">Annotation scale</label>
                            <div class="combo"><select id="annoscale"><option>1:1</option></select><i class="caret"></i></div>
                            <label for="textheight">Text height</label>
                            <div class="pair">
                                <input class="field" id="textheight" type="text" value="0.200">
                                <button type="button" class="pick-height" aria-label="Pick height"><svg viewBox="0 0 34 34"><path class="sg" d="M2 1v29M31 1v12"/><path class="sb" d="M8 6h17"/><path class="fb" d="M5 6l6-4v8zM28 6l-6-4v8z"/><path class="sg" d="M25 16v18M16 25h18M21 21h8v8h-8z"/></svg></button>
                            </div>
                            <label for="plotstyle">Plot style</label>
                            <div class="combo"><select id="plotstyle"><option>ByColor</option></select><i class="caret"></i></div>
                            <label for="plottable">Plot style table</label>
                            <div class="combo"><select id="plottable"><option>None</option></select><i class="caret"></i></div>
                            <label for="attached">Plot style attached to</label>
                            <input class="field" id="attached" type="text" value="Model" disabled>
                            <label for="tabletype">Plot table type</label>
                            <input class="field" id="tabletype" type="text" value="Not available" disabled>
                        </form>
                    </section>
                </aside>
            </div>

            <footer class="status">
                <nav class="layout-tabs">
                    <button class="active">Model</button>
                    <button class="add" aria-label="New layout"><svg viewBox="0 0 22 22"><path class="sg" d="M0 11h22M11 0v22"/></svg></button>
                    <button>Layout1</button>
                    <button>Layout2</button>
                </nav>
                <div class="coords"><span>0.246,</span><span>–0.224</span><span>, 0.000</span></div>
                <div class="modes">
                    <button class="on" aria-label="Grid"><svg viewBox="0 0 40 40"><path class="swh" d="M5 12h30M5 20h30M5 28h30M12 5v30M20 5v30M28 5v30"/></svg></button>
                    <button aria-label="Snap"><svg viewBox="0 0 40 40"><path class="fg" d="M8 8h4v4H8zM18 8h4v4h-4zM28 8h4v4h-4zM8 18h4v4H8zM18 18h4v4h-4zM28 18h4v4h-4zM8 28h4v4H8zM18 28h4v4h-4zM28 28h4v4h-4z"/></svg></button>
                    <button class="on" aria-label="Ortho"><svg viewBox="0 0 40 40"><path class="swh" d="M5 4v31h31M5 25h10v10"/></svg></button>
                    <button aria-label="Polar"><svg viewBox="0 0 40 40"><circle class="sg" cx="18" cy="20" r="13"/><path class="sg" d="M36 20H18L33 6M23 15q2 2 2 5"/></svg></button>
                    <button aria-label="Dynamic input"><svg viewBox="0 0 40 40"><path class="sg" d="M4 14h14M11 7v14"/><path class="fg" d="M16 24h20v9H16z"/><path class="sd" d="M19 26v5"/></svg></button>
                    <button aria-label="Lineweight"><svg viewBox="0 0 40 40"><path class="sg" d="M4 8h32M4 16h32M4 26h32"/><path class="fg" d="M4 7h16v4H4zM4 15h16v6H4zM4 25h16v8H4z"/></svg></button>
                    <button class="on" aria-label="Transparency"><svg viewBox="0 0 40 40"><path class="swh" d="M7 7h26v26H7z"/><path class="fw" d="M10 10h4v4h-4zM18 10h4v4h-4zM26 10h4v4h-4zM14 14h4v4h-4zM22 14h4v4h-4zM10 18h4v4h-4zM18 18h4v4h-4zM26 18h4v4h-4zM14 22h4v4h-4zM22 22h4v4h-4zM10 26h4v4h-4zM18 26h4v4h-4zM26 26h4v4h-4z"/></svg></button>
                    <button class="on" aria-label="Selection cycling"><svg viewBox="0 0 40 40"><path class="swh" d="M12 5H7v27h5M23 5h5v16M13 10h8v6h-8z"/><circle class="swh" cx="17" cy="24" r="4"/><path class="fw" d="M24 17l12 13-6 1 3 5-4 1-2-5-3 3z"/></svg></button>
                    <button class="on" aria-label="Object snap tracking"><svg viewBox="0 0 40 40"><path class="swh" d="M28 9L5 32h31"/><path class="fw" d="M14 16h6v6h-6z"/></svg></button>
                    <button class="on" aria-label="Object snap"><svg viewBox="0 0 40 40"><path class="swh" d="M17 9h18v26H8V18M5 5h8v8H5z"/></svg></button>
                    <button class="on white" aria-label="Annotation visibility"><svg viewBox="0 0 40 40"><use href="#annot" x="2" y="4" width="32" height="32"/><circle class="fw" cx="30" cy="12" r="6"/></svg></button>
                    <button class="gray" aria-label="Auto scale"><svg viewBox="0 0 40 40"><use href="#annot" x="2" y="4" width="32" height="32"/><path class="fy" d="M30 4l-6 9h4l-3 8 9-10h-4l3-7z"/></svg></button>
                    <button class="gray" aria-label="Annotation scale"><svg viewBox="0 0 40 40"><use href="#annot" x="4" y="4" width="32" height="32"/></svg></button>
                    <button class="scale">1:1<i class="caret"></i></button>
                    <button aria-label="Workspaces"><svg viewBox="0 0 40 40"><path class="sg" d="M7 5h12v13H7zM13 24l6 11H7z"/><circle class="sg" cx="31" cy="17" r="6"/></svg></button>
                    <button class="gray" aria-label="Settings"><svg viewBox="0 0 40 40"><use href="#gear" x="5" y="5" width="30" height="30"/></svg></button>
                </div>
            </footer>
        </div>
    </div>
</body>
</html>
```
FILE: styles.css
```css
* {
    margin: 0;
    padding: 0;
    box-sizing: border-box;
}

body {
    height: 100vh;
    display: flex;
    flex-direction: column;
    overflow: hidden;
    background: #232830;
    color: #d9d9d9;
    font-family: "Noto Sans", sans-serif;
    font-size: 22px;
}

button, input, select {
    font: inherit;
    color: inherit;
    background: none;
    border: none;
    outline: none;
}

svg {
    display: block;
    overflow: visible;
}

.sprite {
    position: absolute;
    width: 0;
    height: 0;
}

/* Icon colors */
.fg { fill: #d9d9d9; }
.fw { fill: #fff; }
.fm { fill: #b9b9b9; }
.fb { fill: #8fc8fa; }
.fy { fill: #fbd386; }
.ft { fill: #d4ab7a; }
.fr { fill: #ea7070; }
.fgr { fill: #8ed697; }
.fteal { fill: #8bd9e6; }
.dark { fill: #2f3340; }
.mid { fill: #777983; }
.cut { fill: #3d4352; }
.cut2 { fill: #3d4352; }
.cut3 { fill: #2f323f; }
.sg, .sw3, .swh, .sb, .sb2, .sb4, .sd, .sm, .sm2, .sdk, .sdk2, .st, .sy, .sgr, .sred, .sgreen, .scheck {
    fill: none;
    stroke-width: 2px;
}
.sg { stroke: #d9d9d9; }
.swh { stroke: #fff; }
.sw3 { stroke: #fff; stroke-width: 3px; }
.sb { stroke: #84c4fb; }
.sb2 { stroke: #4a94e4; }
.sb4 { stroke: #84c4fb; stroke-width: 4px; }
.sd { stroke: #5d6069; }
.sm { stroke: #97999c; }
.sm2 { stroke: #aaa; }
.sdk { stroke: #777; }
.sdk2 { stroke: #3d4352; stroke-width: 3px; }
.st { stroke: #d4ab7a; stroke-width: 3px; }
.sy { stroke: #fbd386; }
.sgr { stroke: #7fd68b; }
.sred { stroke: #e33; stroke-width: 3px; }
.sgreen { stroke: #393; stroke-width: 3px; }
.scheck { stroke: #7fd68b; stroke-width: 4px; }
.dim { fill: #717681; }
.dimb { fill: #4b6786; }
.cutfill { fill: #3d4352; }
.bluebox { fill: #8fc8fa; stroke: #4d5566; }
.note { fill: #ec7640; stroke: #fff; stroke-width: 2px; }
.blue { color: #84c4fb; }
.teal { color: #8bd9e6; }
.gray { color: #d9d9d9; }
.white { color: #fff; }

.glyph {
    font-family: Roboto, sans-serif;
    text-anchor: middle;
    fill: #d9d9d9;
}
.glyph.bold { font-weight: 500; }
.glyph.white { fill: #fff; }
.glyph.blue { fill: #84c4fb; }

.caret {
    flex: none;
    width: 12px;
    height: 9px;
    background: #d9d9d9;
    clip-path: polygon(0 0, 100% 0, 50% 100%);
}

/* Main toolbar */
.toolbar {
    flex: none;
    height: 72px;
    display: flex;
    justify-content: center;
    align-items: center;
    gap: 96px;
    padding-right: 10px;
    background: #3c4453;
    border-bottom: 2px solid #232830;
}

.tool-set {
    display: flex;
}

.tool-set button {
    width: 66px;
    display: flex;
    justify-content: center;
}

.tool-set button > svg {
    width: 32px;
    height: 32px;
}

.workspace {
    flex: 1;
    min-height: 0;
    display: flex;
}

/* Tool palette */
.palette {
    flex: none;
    width: 182px;
    display: flex;
    flex-direction: column;
    background: #3d4352;
    border-right: 2px solid #232830;
    font-family: "Liberation Sans", sans-serif;
}

.palette-tabs {
    display: flex;
    height: 46px;
}

.palette-tabs button {
    width: 67px;
    display: grid;
    place-items: center;
    background: #2f323f;
    border-right: 2px solid #232830;
    border-bottom: 2px solid #232830;
}

.palette-tabs .active {
    background: none;
    border-bottom: none;
}

.palette-tabs .more {
    flex: 1;
    background: none;
    border-right: none;
}

.palette-tabs svg {
    width: 32px;
    height: 32px;
}

.more svg {
    fill: none;
    stroke: #999b9f;
    stroke-width: 2px;
}

.tool-group {
    border-bottom: 2px solid transparent;
    border-image: linear-gradient(to right, transparent 8px, #272b35 8px, #272b35 172px, transparent 172px) 2;
    padding-bottom: 10px;
}

.tool-group:last-of-type {
    border: none;
    padding: 0;
}

.tool-group h3 {
    height: 40px;
    display: flex;
    align-items: center;
    padding: 5px 10px 0 8px;
    font-size: 20px;
    font-weight: normal;
    color: #f2f2f2;
}

.palette-tabs + .tool-group h3 {
    height: 38px;
    padding-top: 3px;
}

.tool-group .twisty {
    width: 17px;
    height: 9px;
    margin-right: 9px;
    background: #f2f2f2;
    clip-path: polygon(0 0, 100% 0, 50% 100%);
}

.gear {
    width: 18px;
    height: 18px;
    margin-left: auto;
}

.tool-grid {
    display: grid;
    grid-template-columns: repeat(3, 1fr);
    grid-auto-rows: 64px;
    place-items: center;
}

.tool-grid button {
    position: relative;
    width: 44px;
    height: 44px;
    display: grid;
    place-items: center;
}

.tool-grid button > svg {
    width: 32px;
    height: 32px;
}

.tool-grid .selected {
    background: #323844;
}

.fly::after {
    content: "";
    position: absolute;
    right: 0;
    bottom: 0;
    width: 8px;
    height: 8px;
    background: #9b9b9b;
    clip-path: polygon(100% 0, 100% 100%, 0 100%);
}

.palette-foot {
    flex: 1;
    display: flex;
    align-items: center;
    gap: 34px;
    padding: 0 0 4px 31px;
}

.palette-foot svg {
    height: 24px;
}

/* Drawing area */
.stage {
    flex: 1;
    min-width: 0;
    display: flex;
    flex-direction: column;
}

.stage-main {
    flex: 1;
    min-height: 0;
    display: flex;
}

.document {
    flex: 1;
    min-width: 0;
    display: flex;
    flex-direction: column;
}

.file-tabs {
    flex: none;
    display: flex;
    height: 46px;
    background: #3c4453;
    border-bottom: 2px solid #232830;
}

.file-tabs button {
    display: flex;
    align-items: center;
    justify-content: center;
    width: 47px;
    border-right: 2px solid #232830;
}

.file-tabs .thumbs svg {
    width: 30px;
    height: 30px;
}

.add svg {
    width: 22px;
    height: 22px;
}

.file-tabs .file {
    width: 257px;
    justify-content: flex-start;
    padding-left: 6px;
    background: #4f5a6e;
    color: #f5f5f5;
    font-family: "Liberation Sans", sans-serif;
    font-size: 23px;
}

.viewport {
    position: relative;
    flex: 1;
    min-height: 0;
    background: #212830;
    overflow: hidden;
}

.model {
    position: absolute;
    inset: 0;
    width: 100%;
    height: 100%;
}

.grid, .axis-z, .axis-x, .axis-y, .inner, .wire, .cross-x, .cross-y, .cross-z, .pick {
    fill: none;
    stroke-width: 1px;
    shape-rendering: crispEdges;
}

.grid { stroke: #252d37; }
.axis-z { stroke: #343b4b; }
.axis-x { stroke: #6f2428; }
.axis-y { stroke: #1f7d22; }
.face { fill: #5b6061; }
.face-up { fill: #505256; }
.face-both { fill: #727577; }
.inner { stroke: #4c5055; }
.wire { stroke: #fff; }
.wire.soft { stroke: #c8c8c8; }
.ucs-z { stroke: #3460a4; stroke-width: 11px; stroke-linecap: round; }
.ucs-ball { fill: #5a9bee; }
.ucs { font: 300 34px "Open Sans", sans-serif; text-anchor: middle; }
.ucs.y { fill: #12a012; }
.ucs.x { fill: #c82020; }
.ucs.z { fill: #1a6be0; }
.cross-x { stroke: #f57c7c; }
.cross-y { stroke: #7df57d; }
.cross-z { stroke: #7c7cf0; }
.pick { fill: #212830; stroke: #fff; }
.ring { fill: #484e56; }
.cube { fill: #b1b2b4; }
.cube-back { fill: #a9abad; }
.cube-in { fill: #9fa5ad; }
.cube-edge { stroke: #3a3e44; fill: none; stroke-dasharray: 12 4; }
.cube-rim { stroke: #6b6e73; fill: none; }
.cube-text { font-family: "Open Sans", sans-serif; font-weight: 700; fill: #4c525c; text-anchor: middle; }
.compass { font: 600 31px "Open Sans", sans-serif; fill: #b5b7b9; text-anchor: middle; }

.view-controls {
    position: absolute;
    left: 28px;
    top: 7px;
    display: flex;
    align-items: center;
    gap: 12px;
    height: 32px;
    font-size: 24px;
    color: #999b9e;
}

.view-controls button:first-child {
    margin-right: 12px;
    font-size: 22px;
}

.view-controls i {
    width: 2px;
    height: 28px;
    background: #8b8d90;
}

.ucs-menu {
    position: absolute;
    right: 90px;
    top: 341px;
    display: flex;
    align-items: center;
    gap: 14px;
    height: 23px;
    padding: 0 10px 0 8px;
    border-radius: 8px;
    background: #66747b;
    color: #212830;
    font: 21px "Liberation Sans", sans-serif;
}

.ucs-menu svg {
    width: 18px;
    height: 11px;
    fill: #8fa0a6;
    stroke: #212830;
    stroke-width: 2px;
}

/* Command line */
.command {
    position: absolute;
    left: 50%;
    bottom: 2px;
    transform: translateX(-50%);
    width: 996px;
    display: grid;
    grid-template-columns: 76px 1fr;
    gap: 2px;
    font-size: 20px;
    color: #b4b7bb;
}

.history {
    position: relative;
    grid-column: 2;
    height: 94px;
    padding: 6px 8px 0;
    background: #3c4453;
    line-height: 30px;
}

.history .thumb {
    position: absolute;
    right: 9px;
    bottom: 2px;
    width: 8px;
    height: 40px;
    border-radius: 4px;
    background: #909397;
}

.prompt,
.entry {
    height: 46px;
    display: flex;
    align-items: center;
    padding-bottom: 2px;
    background: #3c4453;
}

.prompt {
    justify-content: center;
    gap: 2px;
    font-size: 22px;
}

.entry {
    padding: 0 8px 2px;
}

.command .caret {
    background: #a2a4a8;
}

.entry input {
    flex: 1;
    font-style: italic;
}

.entry input::placeholder {
    color: #9b9ea4;
}

/* Inspector */
.inspector {
    flex: none;
    width: 670px;
    background: #3c4453;
    border-left: 2px solid #232830;
}

.panel-tabs {
    display: flex;
    height: 46px;
}

.panel-tabs button,
.panel-tabs span {
    width: 105px;
    display: grid;
    place-items: center;
    background: #2f323f;
    border-right: 2px solid #232830;
    border-bottom: 2px solid #232830;
}

.panel-tabs span {
    flex: 1;
}

.panel-tabs button > svg {
    width: 34px;
    height: 34px;
}

.panel-tabs .active {
    background: none;
    border-bottom: none;
}

.panel-tabs .more {
    width: 48px;
    background: none;
    border-right: none;
}

.panel-tabs .more svg,
.palette-tabs .more svg {
    width: 16px;
    height: 12px;
}

.layers,
.properties {
    padding: 0 20px 0 23px;
}

.layers {
    padding-bottom: 18px;
    border-bottom: 2px solid #272b35;
}

.section-head {
    display: flex;
    align-items: flex-start;
    height: 67px;
    margin-left: -3px;
}

.section-head h2 {
    flex: 1;
    font: 23px/36px Inter, sans-serif;
    color: #e8e8e8;
}

.layer-tools {
    display: flex;
    gap: 16px;
    padding: 9px 84px 0 0;
}

.layer-tools button {
    width: 32px;
}

.layer-tools button > svg {
    width: 32px;
    height: 32px;
}

.dock {
    padding-top: 2px;
}

.dock svg {
    width: 22px;
    height: 28px;
}

.combo {
    display: flex;
    align-items: center;
    height: 38px;
    padding: 0 7px 0 11px;
    background: #505a6c;
    border: 2px solid #2d3a40;
    border-radius: 5px;
}

.combo select {
    flex: 1;
    min-width: 0;
    padding-bottom: 2px;
    appearance: none;
    color: #fff;
    font-weight: 500;
}

.combo.tall {
    height: 48px;
    margin-bottom: 8px;
}

.combo.mid {
    height: 42px;
}

.combo.off {
    background: #444c5d;
    border-color: #39424f;
}

.combo.off select {
    color: #848a95;
    opacity: 1;
}

.combo.off .caret {
    background: #7c828e;
}

.current-layer {
    gap: 16px;
    padding-left: 19px;
}

.current-layer select {
    margin-left: 8px;
}

.ghost {
    width: 18px;
    height: 20px;
    color: #6e7684;
}

.dot {
    display: block;
    width: 16px;
    height: 16px;
    border-radius: 50%;
    background: #d9d9d9;
}

.swatch {
    flex: none;
    width: 18px;
    height: 18px;
    background: #fff;
    border: 2px solid #000;
}

.line {
    display: block;
    flex: none;
    width: 64px;
    height: 2px;
    background: #fff;
}

.toggle-list {
    display: flex;
    align-items: center;
    gap: 22px;
    height: 57px;
    margin-top: -8px;
    padding: 0 0 2px 5px;
    color: #c6c8cb;
}

.toggle-list .twisty {
    width: 18px;
    height: 15px;
    background: #8e8f91;
    clip-path: polygon(0 0, 100% 0, 50% 100%);
}

.layer-list {
    height: 348px;
    margin-left: -3px;
    background: #505a6c;
    border: 2px solid #2c313d;
}

.layer-list table {
    width: 100%;
    table-layout: fixed;
    border-collapse: separate;
    border-spacing: 0;
}

.layer-list th {
    height: 46px;
    background: #2f323f;
    border-right: 2px solid #292d38;
    border-bottom: 2px solid #292d38;
}

.layer-list th svg {
    height: 20px;
    width: 24px;
    margin: 0 auto;
    color: #d9d9d9;
}

.c-eye { width: 52px; }
.c-small { width: 44px; }
.c-wide { width: 93px; }

.layer-list .c-name {
    position: relative;
    background: #505a6c;
}

.c-name::after {
    content: "";
    position: absolute;
    left: 50%;
    bottom: 0;
    width: 12px;
    height: 9px;
    margin-left: -8px;
    background: #4b95ec;
    clip-path: polygon(50% 0, 100% 100%, 0 100%);
}

.c-name div,
.name div {
    display: flex;
    align-items: center;
}

.layer-list .c-name svg {
    width: 16px;
    height: 16px;
    margin: 0 14px 0 8px;
}

.layer-list .c-name .sort {
    width: 10px;
    margin: 0 14px 0 auto;
}

.layer-list td {
    height: 38px;
    background: #909dad;
    color: #fff;
    line-height: 30px;
}

.layer-list td > .dot,
.layer-list td > .line {
    margin: 0 auto;
}

.name div {
    gap: 19px;
}

.weight {
    padding-left: 14px;
}

.list-tools {
    display: flex;
    align-items: center;
    gap: 28px;
    height: 51px;
    padding-left: 11px;
}

.list-tools svg {
    width: 32px;
    height: 32px;
}

.minus {
    width: 16px;
    height: 4px;
    margin-left: auto;
    background: #7c828d;
}

.columns {
    display: flex;
    align-items: center;
    gap: 6px;
    margin: 0 10px 0 6px;
}

.list-tools .columns svg {
    width: 20px;
    height: 18px;
}

.search {
    display: flex;
    align-items: center;
    gap: 9px;
    height: 40px;
    margin: 0 3px 0 -1px;
    padding: 0 12px;
    border-radius: 6px;
    background: #fff;
}

.search svg {
    width: 32px;
    height: 24px;
    fill: none;
    stroke: #4c4c4c;
    stroke-width: 2px;
}

.search input {
    flex: 1;
    font: 24px Inter, sans-serif;
    color: #222;
}

.search input::placeholder {
    color: #bdbdbd;
}

.properties .section-head {
    height: 51px;
}

.segment {
    display: flex;
    margin-right: 20px;
    border: 2px solid #2c313d;
    border-top: none;
    font-size: 18px;
}

.segment button {
    width: 58px;
    height: 25px;
    line-height: 25px;
    color: #848a95;
}

.segment .on {
    background: #505a6c;
    color: #fff;
    border-left: 2px solid #2c313d;
}

.edit {
    margin-right: 22px;
}

.edit svg {
    width: 28px;
    height: 27px;
}

.properties .dock {
    padding-top: 0;
}

.props {
    display: grid;
    grid-template-columns: 285px 1fr;
    grid-auto-rows: 46px;
    align-items: center;
    column-gap: 18px;
    padding: 11px 8px 0 0;
}

.props label {
    padding-bottom: 2px;
    text-align: right;
    color: #d0d1d3;
}

.with-swatch {
    gap: 20px;
    padding-left: 18px;
}

.with-line {
    gap: 28px;
    padding-left: 14px;
}

.field {
    width: 100%;
    min-width: 0;
    height: 36px;
    padding: 0 7px;
    background: #505a6c;
    border: 2px solid #2d3a40;
    border-radius: 4px;
    color: #fff;
}

.field:disabled {
    background: #444c5d;
    border-color: #3a4350;
    color: #7f8591;
}

.pair {
    display: flex;
    gap: 6px;
}

.slider {
    position: relative;
    flex: 1;
    height: 33px;
    margin: 2px 2px 0 6px;
    background: linear-gradient(#a0a4ab, #a0a4ab) 50% 80% / 1px 11px no-repeat, #505a6c;
    border: 2px solid #2d3a40;
}

.slider input {
    position: absolute;
    inset: 0;
    width: 100%;
    height: 100%;
    appearance: none;
}

.slider input::-webkit-slider-thumb {
    appearance: none;
    width: 3px;
    height: 24px;
    border: solid #5c9cf0;
    border-width: 5px 0;
    background: transparent;
}

.slider output {
    position: absolute;
    right: 5px;
    top: 0;
    line-height: 27px;
    color: #fff;
}

.by-layer,
.pick-height {
    display: flex;
    align-items: center;
    justify-content: space-between;
    height: 37px;
    border: 2px solid #2d3a40;
    border-radius: 4px;
}

.by-layer {
    width: 77px;
    padding: 0 7px 0 12px;
    background: #505a6c;
}

.by-layer svg {
    width: 28px;
    height: 28px;
}

.pick-height {
    width: 39px;
    height: 36px;
}

.pick-height svg {
    width: 34px;
    height: 34px;
}

/* Status bar */
.status {
    flex: none;
    display: flex;
    align-items: stretch;
    height: 48px;
    background: #3c4453;
    border: solid #232830;
    border-width: 2px 2px 2px 0;
}

.layout-tabs {
    display: flex;
    font-family: Inter, sans-serif;
    font-size: 22px;
    color: #b9bbbf;
}

.layout-tabs button {
    width: 118px;
    border-right: 2px solid #2b303b;
}

.layout-tabs .active {
    width: 114px;
    background: #4f5a6e;
    color: #fff;
    font-weight: 500;
}

.layout-tabs .add {
    display: grid;
    place-items: center;
    width: 50px;
}

.coords {
    display: flex;
    align-items: center;
    margin-left: auto;
    padding-left: 24px;
    border-left: 2px solid #232830;
    font-size: 23px;
    color: #b6b8bc;
}

.coords span {
    width: 111px;
}

.coords span:nth-child(2) {
    width: 103px;
}

.coords span:last-child {
    width: 81px;
}

.modes {
    display: flex;
    align-items: center;
    gap: 4px;
    padding-right: 8px;
}

.modes button {
    width: 40px;
    height: 40px;
}

.modes .on {
    background: #6a8fbf;
}

.modes .on .cut2 {
    fill: #6a8fbf;
}

.modes .scale {
    display: flex;
    align-items: center;
    gap: 12px;
    width: 60px;
    color: #b6b8bc;
}
```
